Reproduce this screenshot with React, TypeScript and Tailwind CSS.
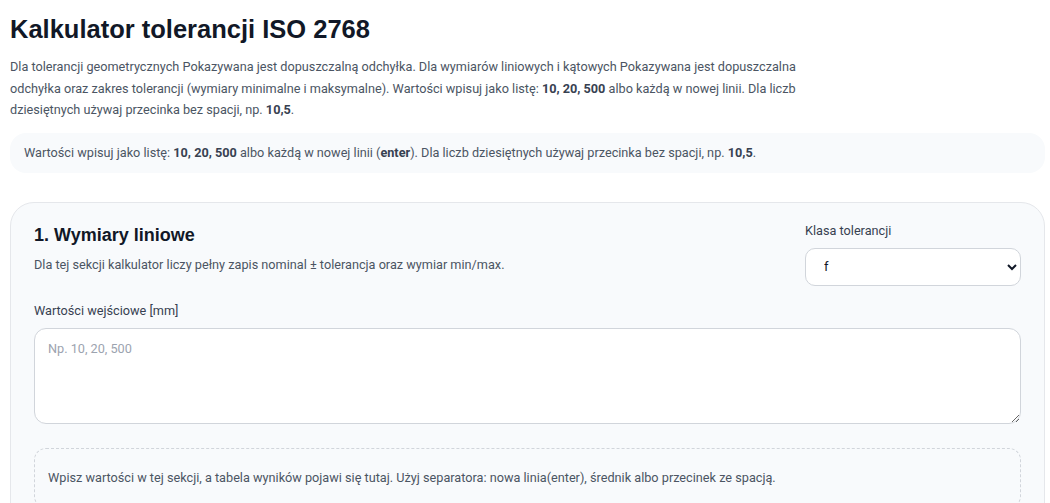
import React from 'react';

const sans = { fontFamily: 'Roboto, "Liberation Sans", sans-serif' };

export default function App() {
    return (
        <div className="min-h-screen bg-white pl-[10px] pr-[5px] pt-[12px] text-[#4b5563]" style={sans}>
            <h1 className="text-[25.5px] leading-[34px] font-bold text-[#111827] font-['Liberation_Sans',Arial,sans-serif]">
                Kalkulator tolerancji ISO 2768
            </h1>

            <p className="mt-[10px] max-w-[800px] text-[12.7px] leading-[21.5px]">
                Dla tolerancji geometrycznych Pokazywana jest dopuszczalną odchyłka. Dla wymiarów liniowych i kątowych Pokazywana jest dopuszczalna odchyłka oraz zakres tolerancji (wymiary minimalne i maksymalne). Wartości wpisuj jako listę: <b className="text-[#374151]">10, 20, 500</b> albo każdą w nowej linii. Dla liczb dziesiętnych używaj przecinka bez spacji, np. <b className="text-[#374151]">10,5</b>.
            </p>

            <div className="mt-[12px] rounded-2xl bg-[#f8fafc] px-[14px] py-[10px] text-[12.7px] leading-[20px]">
                Wartości wpisuj jako listę: <b className="text-[#374151]">10, 20, 500</b> albo każdą w nowej linii (<b className="text-[#374151]">enter</b>). Dla liczb dziesiętnych używaj przecinka bez spacji, np. <b className="text-[#374151]">10,5</b>.
            </div>

            {/* Section card */}
            <div className="mt-[29px] rounded-[24px] border border-[#e5e7eb] bg-[#f8fafc] px-[23px] pt-[19px] pb-[24px]">
                <div className="flex items-start justify-between gap-6">
                    <div>
                        <h2 className="text-[18px] leading-[26px] font-bold text-[#111827] font-['Liberation_Sans',Arial,sans-serif]">
                            1. Wymiary liniowe
                        </h2>
                        <p className="mt-[7px] text-[12.7px] leading-[20px]">
                            Dla tej sekcji kalkulator liczy pełny zapis nominal ± tolerancja oraz wymiar min/max.
                        </p>
                    </div>
                    <div className="w-[216px] shrink-0">
                        <label className="block text-[12.7px] leading-[18px] text-[#374151]">Klasa tolerancji</label>
                        <select className="mt-[8px] h-[38px] w-full rounded-[10px] border border-[#d1d5db] bg-white px-[14px] text-[13px] text-[#111827]" defaultValue="f">
                            <option value="f">f</option>
                            <option value="m">m</option>
                            <option value="c">c</option>
                            <option value="v">v</option>
                        </select>
                    </div>
                </div>

                <label className="mt-[16px] block text-[12.7px] leading-[18px] text-[#374151]">Wartości wejściowe [mm]</label>
                <textarea
                    className="mt-[8px] block h-[96px] w-full rounded-[12px] border border-[#d1d5db] bg-white px-[13px] py-[10px] text-[12.7px] placeholder:text-[#9ca3af]"
                    placeholder="Np. 10, 20, 500"
                />

                <div className="mt-[24px] rounded-[12px] border border-dashed border-[#d1d5db] bg-[#f8fafc] px-[13px] py-[19px] text-[12.7px] leading-[20px]">
                    Wpisz wartości w tej sekcji, a tabela wyników pojawi się tutaj. Użyj separatora: nowa linia(enter), średnik albo przecinek ze spacją.
                </div>
            </div>
        </div>
    );
}
